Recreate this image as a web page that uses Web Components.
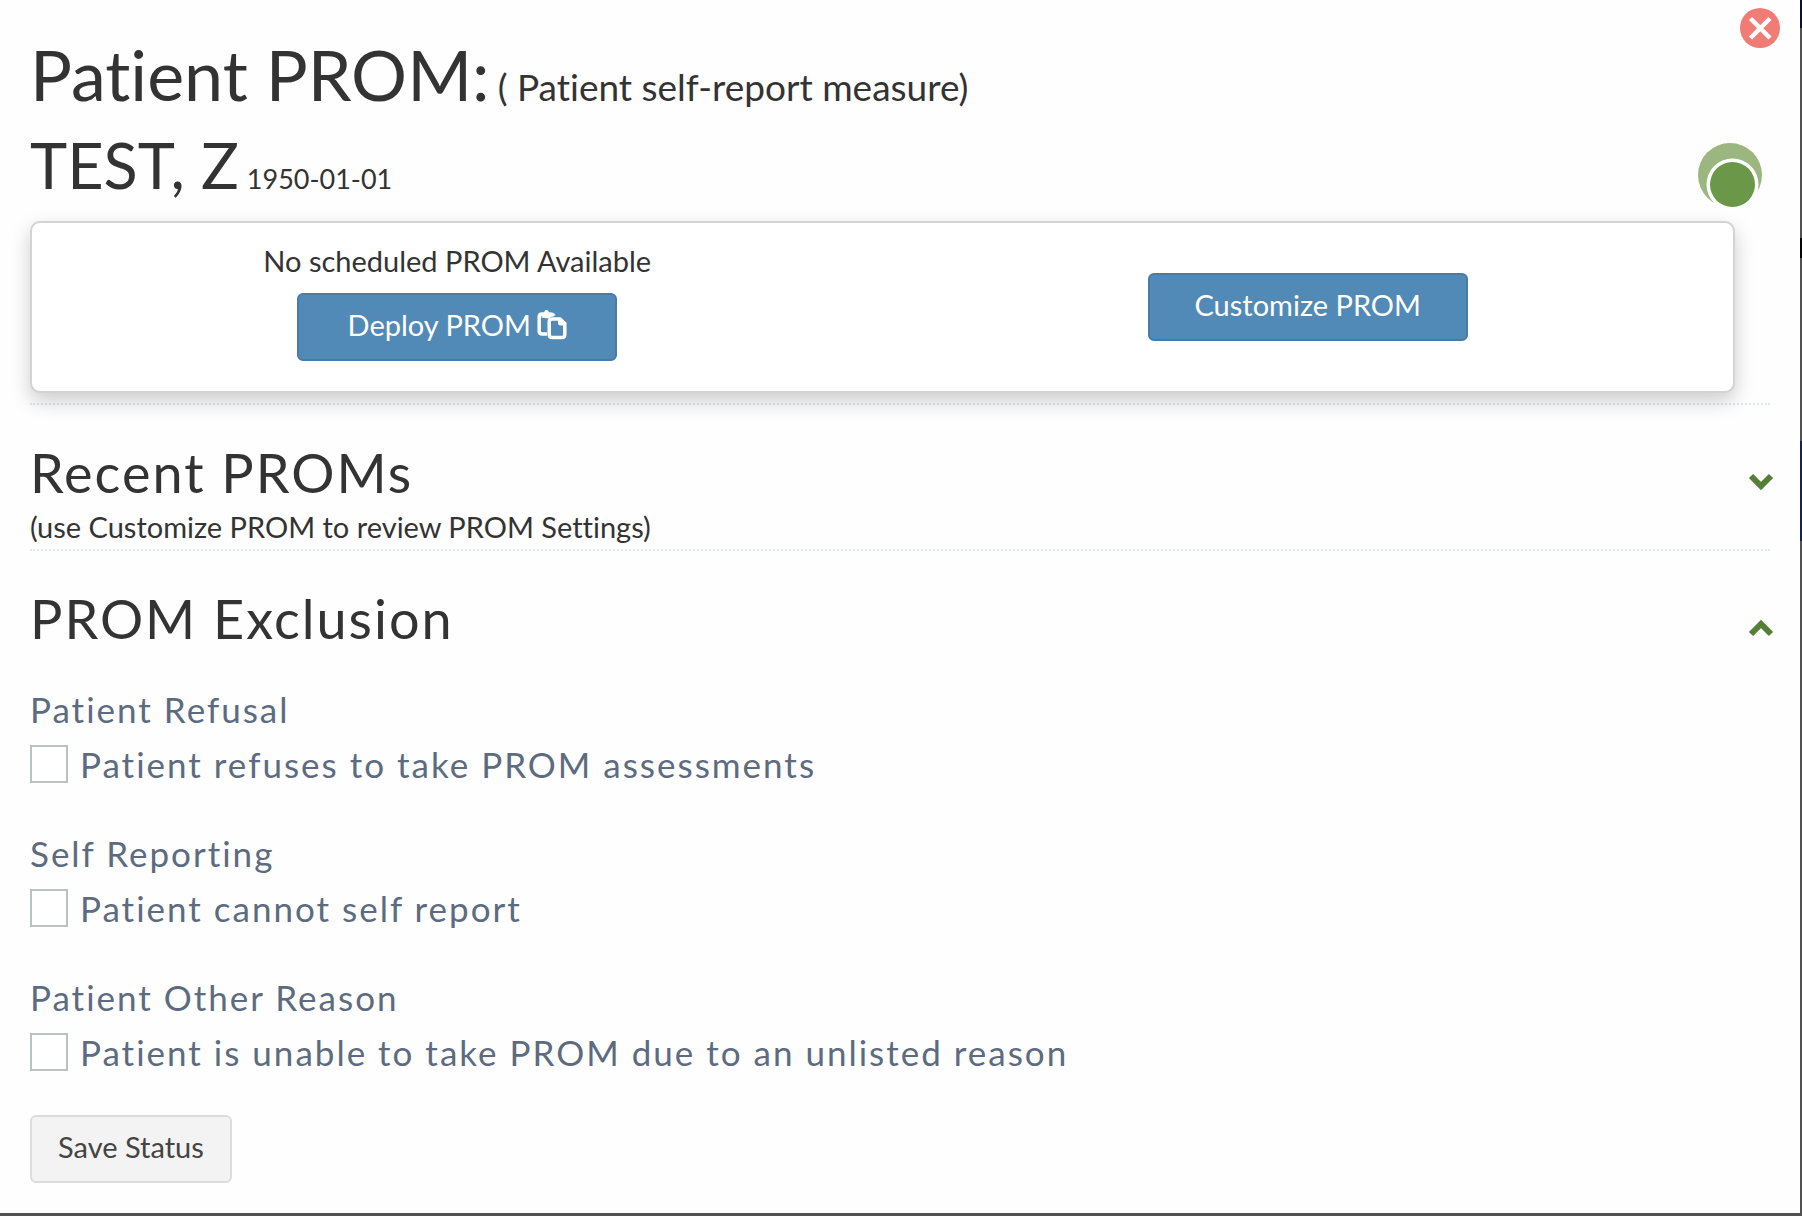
<!DOCTYPE html>
<html lang="en">
<head>
<meta charset="utf-8">
<meta name="viewport" content="width=device-width, initial-scale=1">
<title>Patient PROM</title>
<style>
  :root {
    --color-text: #333;
    --color-label: #5c6b80;
    --color-primary: #528ab7;
    --color-primary-dark: #487ca6;
    --color-green: #557f35;
    --color-dotted: #dfe7ec;
    --color-backdrop: #515151;
  }
  body {
    margin: 0;
    font-family: Lato, "Open Sans", sans-serif;
    font-size: 29px;
    font-variant-ligatures: none;
    line-height: 40px;
    color: var(--color-text);
    background: linear-gradient(#0a1030 28px, var(--color-backdrop) 28px 238px, #050505 238px 258px,
      var(--color-backdrop) 258px 441px, #14244f 441px 541px, var(--color-backdrop) 541px);
  }
</style>
</head>
<body>
<prom-dialog>
  <prom-title slot="header" note="( Patient self-report measure)">Patient PROM:</prom-title>
  <prom-patient dob="1950-01-01">TEST, Z</prom-patient>
  <prom-card>
    <prom-action>
      <span slot="note">No scheduled PROM Available</span>
      <prom-button kind="primary" icon="paste">Deploy PROM</prom-button>
    </prom-action>
    <prom-action>
      <prom-button kind="primary">Customize PROM</prom-button>
    </prom-action>
  </prom-card>
  <prom-section heading="Recent PROMs">
    <span slot="note">(use Customize PROM to review PROM Settings)</span>
  </prom-section>
  <prom-section heading="PROM Exclusion" open>
    <prom-exclusion heading="Patient Refusal">Patient refuses to take PROM assessments</prom-exclusion>
    <prom-exclusion heading="Self Reporting">Patient cannot self report</prom-exclusion>
    <prom-exclusion heading="Patient Other Reason">Patient is unable to take PROM due to an unlisted reason</prom-exclusion>
    <prom-button>Save Status</prom-button>
  </prom-section>
</prom-dialog>

<script>
class PromElement extends HTMLElement {
  connectedCallback() {
    if (this.shadowRoot) return
    this.attachShadow({ mode: 'open' })
    this.shadowRoot.innerHTML = this.template()
  }
}

class PromDialog extends PromElement {
  template() {
    return /*html*/ `
<style>
  :host {
    display: block;
    position: relative;
    box-sizing: border-box;
    min-height: calc(100vh - 3px);
    margin: 0 2px 3px 0;
    padding: 34px 30px 30px;
    background: #fefefe;
  }
  .close {
    position: absolute;
    top: 8px;
    right: 20px;
    padding: 0;
    border: 0;
    background: none;
    cursor: pointer;
  }
  svg {
    display: block;
  }
</style>
<button class="close" aria-label="Close">
  <svg width="40" height="40" viewBox="0 0 40 40">
    <circle cx="20" cy="20" r="20" fill="#f07c75"/>
    <path d="M10.5 10.5 L30 30 M30 10.5 L10.5 30" stroke="#fff" stroke-width="4.5"/>
  </svg>
</button>
<slot name="header"></slot>
<slot></slot>
`
  }
}

class PromTitle extends PromElement {
  template() {
    return /*html*/ `
<style>
  :host {
    display: block;
  }
  h1 {
    margin: 0;
    font-size: 70px;
    font-weight: 400;
    line-height: 80px;
  }
  small {
    font-size: 37px;
    line-height: 1;
    margin-left: 8px;
  }
</style>
<h1><slot></slot><small>${this.getAttribute('note')}</small></h1>
`
  }
}

class PromPatient extends PromElement {
  template() {
    return /*html*/ `
<style>
  :host {
    display: flex;
    justify-content: space-between;
    align-items: flex-start;
    height: 78px;
    margin-top: 15px;
    padding-right: 8px;
  }
  h2 {
    margin: 0;
    font-size: 63px;
    font-weight: 400;
    line-height: 72px;
  }
  small {
    font-size: 27px;
    line-height: 1;
    margin-left: 8px;
  }
  svg {
    align-self: flex-end;
  }
</style>
<h2><slot></slot><small>${this.getAttribute('dob')}</small></h2>
<svg width="64" height="64" viewBox="0 0 64 64" role="img" aria-label="Active">
  <circle cx="32" cy="32" r="32" fill="#9bb77f"/>
  <circle cx="34.5" cy="41.5" r="26" fill="#fefefe"/>
  <circle cx="34.5" cy="41.5" r="22.5" fill="#6a9748"/>
</svg>
`
  }
}

class PromCard extends PromElement {
  template() {
    return /*html*/ `
<style>
  :host {
    display: block;
    padding-bottom: 10px;
    border-bottom: 2px dotted var(--color-dotted);
  }
  div {
    display: grid;
    grid-template-columns: 1fr 1fr;
    align-items: center;
    margin: 14px 35px 0 0;
    padding: 18px 0 30px;
    border: 2px solid #d3d3d3;
    border-radius: 10px;
    background: #fff;
    box-shadow: 0 8px 20px rgba(0, 0, 0, .2);
  }
</style>
<div><slot></slot></div>
`
  }
}

class PromAction extends PromElement {
  template() {
    return /*html*/ `
<style>
  :host {
    display: flex;
    flex-direction: column;
    align-items: center;
    gap: 12px;
  }
  :host(:last-child) {
    padding-top: 12px;
  }
</style>
<slot name="note"></slot>
<slot></slot>
`
  }
}

class PromButton extends PromElement {
  template() {
    const icon = this.getAttribute('icon') === 'paste' ? /*html*/ `
<svg width="30" height="30" viewBox="0 0 30 30" fill="none" stroke="#fff" stroke-width="3.5" aria-hidden="true">
  <path d="M10 24 H5 Q2.2 24 2.2 21 V7 Q2.2 4 5 4 H13 Q16 4 17 6"/>
  <path d="M4.5 7.5 Q4.5 3.5 7 3 Q7.5 0 9.5 0 Q11.5 0 12 3 Q15 3.5 16 6 L11 8.5 Z" fill="#fff" stroke="none"/>
  <path d="M15 9 H23 L27.8 13.5 V24.5 Q27.8 27.5 25 27.5 H15 Q12.2 27.5 12.2 24.5 V12 Q12.2 9 15 9 Z"/>
  <path d="M21 9 V13 Q21 15.5 23.5 15.5 H28 V12 L25 9 Z" fill="#fff" stroke="none"/>
</svg>` : ''
    return /*html*/ `
<style>
  :host {
    display: inline-block;
  }
  button {
    display: flex;
    justify-content: center;
    align-items: center;
    gap: 6px;
    padding: 10px 26px 14px;
    border: 2px solid #dcdcdc;
    border-radius: 6px;
    background: #f3f3f3;
    color: #444;
    font: inherit;
    cursor: pointer;
  }
  :host([kind=primary]) button {
    width: 320px;
    border-color: var(--color-primary-dark);
    background: var(--color-primary);
    color: #fff;
  }
</style>
<button><slot></slot>${icon}</button>
`
  }
}

class PromSection extends PromElement {
  template() {
    return /*html*/ `
<style>
  :host {
    display: block;
    padding-top: 36px;
  }
  :host(:not([open])) {
    padding-bottom: 2px;
    border-bottom: 2px dotted var(--color-dotted);
  }
  header {
    display: flex;
    justify-content: space-between;
    align-items: center;
    margin-bottom: 2px;
  }
  h3 {
    margin: 0;
    font-size: 54px;
    font-weight: 400;
    line-height: 64px;
    letter-spacing: 2px;
  }
  button {
    margin-right: -4px;
    padding: 18px 0 0;
    border: 0;
    background: none;
    color: var(--color-green);
    cursor: pointer;
  }
  svg {
    display: block;
  }
  :host([open]) svg {
    transform: rotate(180deg);
  }
  .note {
    display: block;
  }
  .body {
    padding-top: 36px;
  }
</style>
<header>
  <h3>${this.getAttribute('heading')}</h3>
  <button aria-label="Toggle ${this.getAttribute('heading')}">
    <svg width="26" height="18" viewBox="0 0 26 18"><path d="M3 3 L13 13 L23 3" fill="none" stroke="currentColor" stroke-width="6"/></svg>
  </button>
</header>
<slot name="note" class="note"></slot>
${this.hasAttribute('open') ? '<div class="body"><slot></slot></div>' : ''}
`
  }
}

class PromExclusion extends PromElement {
  template() {
    return /*html*/ `
<style>
  :host {
    display: block;
    margin-bottom: 50px;
    color: var(--color-label);
    font-size: 35px;
    letter-spacing: 2px;
  }
  :host(:nth-last-child(2)) {
    margin-bottom: 44px;
  }
  h4 {
    margin: 0 0 16px;
    font-size: inherit;
    font-weight: 400;
  }
  div {
    display: flex;
    gap: 12px;
    line-height: 38px;
  }
  input {
    appearance: none;
    flex: none;
    width: 38px;
    height: 38px;
    margin: 0;
    border: 2px solid #bcc1c4;
    background: #fff;
  }
</style>
<h4>${this.getAttribute('heading')}</h4>
<div>
  <input type="checkbox" id="check">
  <label for="check"><slot></slot></label>
</div>
`
  }
}

customElements.define('prom-dialog', PromDialog)
customElements.define('prom-title', PromTitle)
customElements.define('prom-patient', PromPatient)
customElements.define('prom-card', PromCard)
customElements.define('prom-action', PromAction)
customElements.define('prom-button', PromButton)
customElements.define('prom-section', PromSection)
customElements.define('prom-exclusion', PromExclusion)
</script>
</body>
</html>
